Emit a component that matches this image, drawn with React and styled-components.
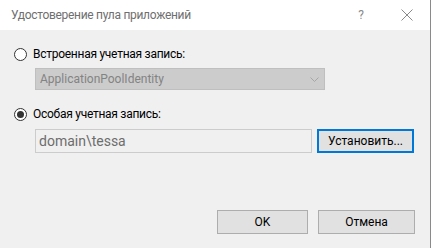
import React from "react";
import styled, { createGlobalStyle } from "styled-components";

const Global = createGlobalStyle`
  html, body { margin: 0; padding: 0; background: #f0f0f0; }
  * { box-sizing: border-box; }
`;

const Window = styled.div`
  width: 431px;
  height: 248px;
  display: flex;
  flex-direction: column;
  background: #f0f0f0;
  border-right: 1px solid #8a8a8a;
  font-family: Roboto, "Noto Sans", sans-serif;
  font-size: 12px;
  color: #000;
  overflow: hidden;
`;

const TitleBar = styled.div`
  height: 30px;
  flex: none;
  background: #fff;
  display: flex;
  align-items: center;
  padding-left: 11px;
  color: #6f6f6f;
`;

const Title = styled.div`
  flex: 1;
  letter-spacing: -0.3px;
`;

const TitleBtn = styled.div`
  width: 46px;
  height: 30px;
  display: flex;
  align-items: center;
  justify-content: center;
  color: #8a8a8a;
`;

const Body = styled.div`
  flex: 1;
  display: flex;
  flex-direction: column;
  padding: 17px 15px 14px 14px;
`;

const RadioRow = styled.label`
  display: flex;
  align-items: center;
  gap: 6px;
  height: 14px;
  margin-top: ${(p) => p.mt || 0}px;
  line-height: 14px;
  letter-spacing: -0.27px;
`;

const RadioCircle = styled.span`
  width: 13px;
  height: 13px;
  border-radius: 50%;
  border: 1px solid #333;
  background: #fff;
  display: flex;
  align-items: center;
  justify-content: center;
  &::after {
    content: "";
    display: ${(p) => (p.checked ? "block" : "none")};
    width: 7px;
    height: 7px;
    border-radius: 50%;
    background: #333;
  }
`;

const Combo = styled.div`
  margin: 7px 0 0 21px;
  width: 290px;
  height: 22px;
  background: #cccccc;
  border: 1px solid #bfbfbf;
  display: flex;
  align-items: center;
  justify-content: space-between;
  padding: 0 5px 0 4px;
  color: #838383;
`;

const InputRow = styled.div`
  margin: 8px 0 0 21px;
  display: flex;
  gap: 5px;
`;

const TextBox = styled.div`
  width: 277px;
  height: 24px;
  border: 1px solid #cccccc;
  background: #f0f0f0;
  display: flex;
  align-items: center;
  padding-left: 3px;
  color: #6d6d6d;
  font-size: 14px;
`;

const Button = styled.div`
  width: ${(p) => p.w}px;
  height: 24px;
  background: #e1e1e1;
  border: ${(p) => (p.primary ? "2px solid #0078d7" : "1px solid #adadad")};
  display: flex;
  align-items: center;
  justify-content: center;
  color: #000;
`;

const Footer = styled.div`
  margin-top: auto;
  display: flex;
  justify-content: flex-end;
  gap: 10px;
`;

export default function App() {
  return (
    <>
      <Global />
      <Window>
        <TitleBar>
          <Title>Удостоверение пула приложений</Title>
          <TitleBtn>?</TitleBtn>
          <TitleBtn>
            <svg width="12" height="12" viewBox="0 0 12 12">
              <path d="M0.5 0.5 L11.5 11.5 M11.5 0.5 L0.5 11.5" stroke="#8a8a8a" strokeWidth="1" />
            </svg>
          </TitleBtn>
        </TitleBar>
        <Body>
          <RadioRow>
            <RadioCircle />
            Встроенная учетная запись:
          </RadioRow>
          <Combo>
            <span>ApplicationPoolIdentity</span>
            <svg width="9" height="5" viewBox="0 0 9 5">
              <path d="M0.5 0.5 L4.5 4.5 L8.5 0.5" stroke="#a6a6a6" fill="none" />
            </svg>
          </Combo>
          <RadioRow mt={17}>
            <RadioCircle checked />
            Особая учетная запись:
          </RadioRow>
          <InputRow>
            <TextBox>domain\tessa</TextBox>
            <Button primary w={97}>Установить...</Button>
          </InputRow>
          <Footer>
            <Button w={91}>OK</Button>
            <Button w={97}>Отмена</Button>
          </Footer>
        </Body>
      </Window>
    </>
  );
}
